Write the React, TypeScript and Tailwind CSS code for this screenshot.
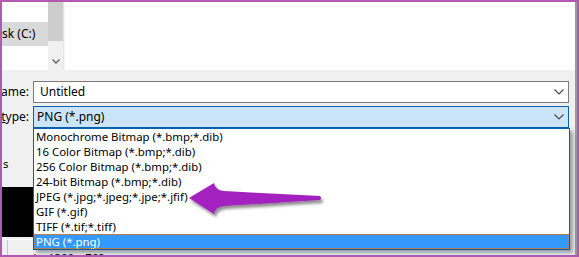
import React from 'react'

// Save-as dialog: file type dropdown opened, with a purple annotation arrow
const FILE_TYPES = [
  'Monochrome Bitmap (*.bmp;*.dib)',
  '16 Color Bitmap (*.bmp;*.dib)',
  '256 Color Bitmap (*.bmp;*.dib)',
  '24-bit Bitmap (*.bmp;*.dib)',
  'JPEG (*.jpg;*.jpeg;*.jpe;*.jfif)',
  'GIF (*.gif)',
  'TIFF (*.tif;*.tiff)',
  'PNG (*.png)',
]

function Chevron({ className = '' }: { className?: string }) {
  return (
    <svg width="10" height="6" viewBox="0 0 10 6" className={className}>
      <path d="M0.5 0.5 L5 5 L9.5 0.5" fill="none" stroke="#4a4a4a" strokeWidth="1.2" />
    </svg>
  )
}

export default function App() {
  return (
    <div
      className="relative w-[579px] h-[257px] overflow-hidden border-2 border-[#b158b1] bg-[#f0f0f0] text-[11.4px] text-black"
      style={{ fontFamily: '"Segoe UI", "Noto Sans", "Open Sans", sans-serif' }}
    >
      <div className="flex flex-col h-full border-r-2 border-r-[#9a9a9a]">
        {/* top: navigation pane + file list */}
        <div className="flex h-[68px] shrink-0">
          <div className="w-[46px] bg-white overflow-hidden">
            <div className="mt-[20px] h-[24px] bg-[#d9d9d9] flex items-center whitespace-nowrap text-[12px]">
              <span className="-ml-[3px]">isk (C:)</span>
            </div>
          </div>
          <div className="w-[15px] bg-[#f0f0f0] flex flex-col">
            <div className="h-[39px] bg-[#cdcdcd]" />
            <div className="flex-1 flex items-end justify-center pb-[6px]">
              <svg width="8" height="5" viewBox="0 0 8 5">
                <path d="M0.5 0.5 L4 4 L7.5 0.5" fill="none" stroke="#606060" strokeWidth="1.4" />
              </svg>
            </div>
          </div>
          <div className="w-[2px] bg-[#f6f6f6] border-l border-l-[#e6e6e6]" />
          <div className="flex-1 bg-white" />
        </div>

        {/* bottom: name / type fields */}
        <div className="flex-1 flex">
          <div className="w-[31px] flex flex-col shrink-0">
            <div className="mt-[11px] h-[22px] flex items-center justify-end pr-[4px] text-[12px]">ame:</div>
            <div className="mt-[3px] h-[22px] flex items-center justify-end pr-[4px] text-[12px]">
              <span><span className="underline">t</span>ype:</span>
            </div>
            <div className="mt-[30px] h-[12px] pl-[1px] leading-none">s</div>
            <div className="mt-[17px] h-[50px] bg-black" />
            <div className="h-[3px] border-b border-b-white" />
            <div className="flex-1 border-l border-l-[#c8c8c8] ml-[5px]" />
          </div>
          <div className="flex-1 flex flex-col pr-[6px]">
            <div className="mt-[11px] h-[22px] bg-white border border-[#7a7a7a] flex items-center justify-between pl-[6px] pr-[4px] text-[12px]">
              <span>Untitled</span>
              <Chevron />
            </div>
            <div className="mt-[3px] h-[22px] bg-[#cce4f7] border border-[#0062b1] flex items-center justify-between pl-[3px] pr-[4px] text-[12px]">
              <span>PNG (*.png)</span>
              <Chevron />
            </div>
          </div>
        </div>
      </div>

      {/* status text peeking under the list */}
      <div className="absolute left-[30px] top-[250px] text-[11px] leading-none whitespace-nowrap flex items-center gap-[4px]">
        <span>‡□</span>
        <span>1366 × 768</span>
      </div>

      {/* open dropdown list */}
      <div className="absolute left-[31px] top-[126px] w-[537px] border border-[#0062b1] bg-white shadow-[3px_3px_4px_rgba(0,0,0,0.35)]">
        {FILE_TYPES.map((t, i) => (
          <div
            key={t}
            className={
              i === FILE_TYPES.length - 1
                ? 'h-[15px] leading-[15px] pl-[2px] bg-[#3399ff] text-white outline-1 outline-dotted outline-[#c0804a] -outline-offset-1 whitespace-nowrap'
                : 'h-[15px] leading-[15px] pl-[2px] whitespace-nowrap'
            }
          >
            {t}
          </div>
        ))}
      </div>

      {/* annotation arrow */}
      <svg className="absolute left-0 top-0" width="579" height="257" viewBox="0 0 579 257">
        <defs>
          <filter id="sh" x="-10%" y="-30%" width="130%" height="180%">
            <feDropShadow dx="2" dy="3" stdDeviation="1.5" floodColor="#000" floodOpacity="0.45" />
          </filter>
        </defs>
        <path
          d="M187 196 L212 181 Q213 188 222 189 L318 194 Q320 196 318 198 L222 204 Q213 205 212 212 Z"
          fill="#a321bf"
          filter="url(#sh)"
        />
      </svg>
    </div>
  )
}
